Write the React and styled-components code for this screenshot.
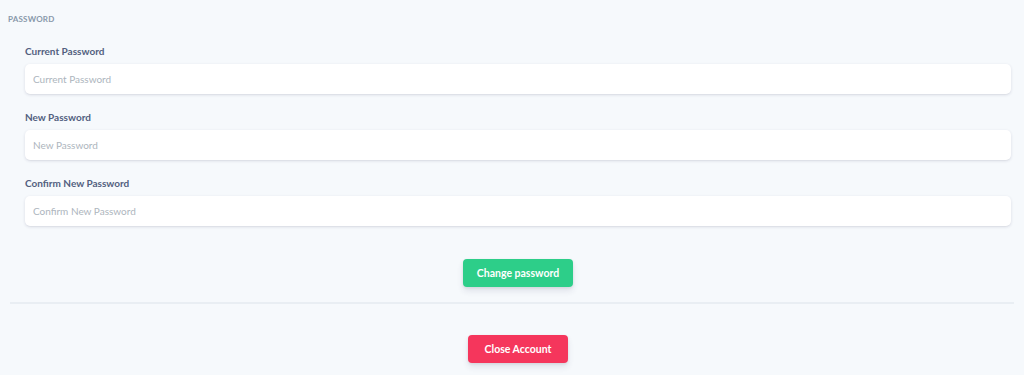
import React from "react";
import styled, { createGlobalStyle } from "styled-components";

const GlobalStyle = createGlobalStyle`
  html, body {
    margin: 0;
    padding: 0;
    background: #f6f9fc;
    font-family: "Lato", "Open Sans", sans-serif;
  }
`;

const Page = styled.div`
  width: 1024px;
  height: 375px;
  overflow: hidden;
  box-sizing: border-box;
  padding-top: 14px;
`;

const SectionTitle = styled.h6`
  margin: 0 0 0 8px;
  font-size: 8px;
  font-weight: 700;
  letter-spacing: 0.2px;
  color: #8898aa;
  text-transform: uppercase;
  line-height: 10px;
`;

const Form = styled.form`
  display: flex;
  flex-direction: column;
  padding: 22px 13px 0 25px;
`;

const Field = styled.div`
  display: flex;
  flex-direction: column;
  gap: 7px;
  margin-bottom: 18px;
`;

const Label = styled.label`
  font-size: 10px;
  font-weight: 700;
  color: #525f7f;
  line-height: 11px;
`;

const Input = styled.input`
  height: 30px;
  box-sizing: border-box;
  border: none;
  border-radius: 5px;
  background: #fff;
  box-shadow: 0 1px 3px rgba(50, 50, 93, 0.15), 0 1px 0 rgba(0, 0, 0, 0.02);
  padding: 0 8px;
  font-family: inherit;
  font-size: 10px;
  color: #525f7f;
  outline: none;
  &::placeholder {
    color: #adb5bd;
  }
`;

const Actions = styled.div`
  display: flex;
  justify-content: center;
  padding: ${(p) => p.$pad};
`;

const Button = styled.button`
  height: 28px;
  padding: 0 ${(p) => p.$px}px;
  border: none;
  border-radius: 4px;
  background: ${(p) => p.$bg};
  color: #fff;
  font-family: inherit;
  font-size: 10.5px;
  font-weight: 700;
  box-shadow: 0 4px 6px rgba(50, 50, 93, 0.11), 0 1px 3px rgba(0, 0, 0, 0.08);
  cursor: pointer;
`;

const Divider = styled.hr`
  margin: 15px 10px 0 10px;
  border: none;
  border-top: 2px solid #e9eef3;
`;

const fields = ["Current Password", "New Password", "Confirm New Password"];

export default function App() {
  return (
    <Page>
      <GlobalStyle />
      <SectionTitle>Password</SectionTitle>
      <Form onSubmit={(e) => e.preventDefault()}>
        {fields.map((f) => (
          <Field key={f}>
            <Label>{f}</Label>
            <Input type="password" placeholder={f} />
          </Field>
        ))}
        <Actions $pad="15px 0 0 0">
          <Button $bg="#2dce89" $px={14}>Change password</Button>
        </Actions>
      </Form>
      <Divider />
      <Actions $pad="31px 13px 0 25px">
        <Button $bg="#f5365c" $px={17}>Close Account</Button>
      </Actions>
    </Page>
  );
}
